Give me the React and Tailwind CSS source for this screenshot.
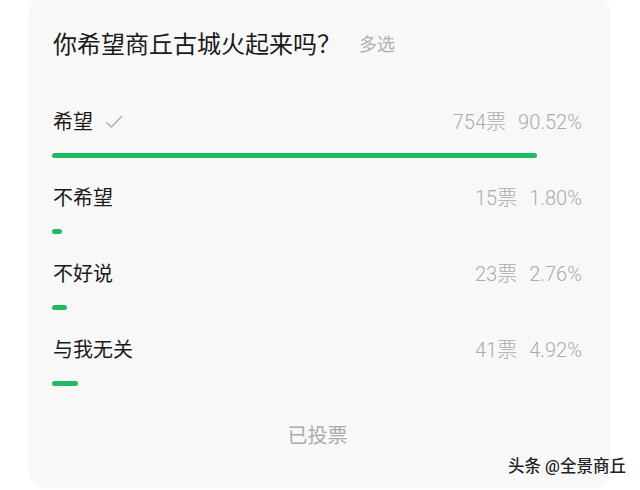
import React from "react";

const options = [
  { label: "希望", votes: "754票", pct: 90.52, checked: true },
  { label: "不希望", votes: "15票", pct: 1.8 },
  { label: "不好说", votes: "23票", pct: 2.76 },
  { label: "与我无关", votes: "41票", pct: 4.92 },
];

const font = { fontFamily: 'Roboto, "Noto Sans CJK SC", sans-serif' };

function Check() {
  return (
    <svg width="18" height="14" viewBox="0 0 18 14" fill="none">
      <path d="M1.5 7.5 L6.5 12 L16.5 1.5" stroke="#b4b4b4" strokeWidth="1.6" strokeLinecap="round" strokeLinejoin="round" />
    </svg>
  );
}

export default function App() {
  return (
    <div className="relative w-[640px] h-[490px] bg-white overflow-hidden" style={font}>
      <div className="ml-[29px] mt-[-4px] w-[581px] h-[492px] rounded-[18px] bg-[#f8f8f8] shadow-[0_0_3px_rgba(0,0,0,0.04)] pl-[24px] pr-[28px] pt-[33px] flex flex-col">
        <div className="flex items-center h-[32px]">
          <span className="text-[24px] leading-[32px] text-[#1a1a1a]">你希望商丘古城火起来吗？</span>
          <span className="ml-[18px] text-[18px] leading-[32px] text-[#b0b0b0]">多选</span>
        </div>
        <div className="mt-[46px] flex flex-col gap-[25px]">
          {options.map((o) => (
            <div key={o.label} className="flex flex-col">
              <div className="flex items-center justify-between h-[30px]">
                <div className="flex items-center gap-[12px]">
                  <span className="text-[20px] leading-[30px] text-[#1a1a1a]">{o.label}</span>
                  {o.checked && <Check />}
                </div>
                <div className="flex items-center gap-[12px] text-[20px] leading-[30px] text-[#ababab] font-light">
                  <span>{o.votes}</span>
                  <span>{o.pct.toFixed(2)}%</span>
                </div>
              </div>
              <div className="mt-[16px] h-[5px] w-[536px] -ml-px">
                <div
                  className="h-[5px] rounded-full bg-[#1fba63]"
                  style={{ width: `${Math.max(o.pct, 1.9)}%` }}
                />
              </div>
            </div>
          ))}
        </div>
        <div className="mt-[35px] text-center text-[20px] leading-[30px] text-[#acacac]">已投票</div>
      </div>
      <div
        className="absolute left-[508px] top-[456px] text-[16.5px] leading-[22px] font-medium text-[#222]"
        style={{ textShadow: "0 0 2px #fff, 0 0 2px #fff" }}
      >
        头条 @全景商丘
      </div>
    </div>
  );
}
